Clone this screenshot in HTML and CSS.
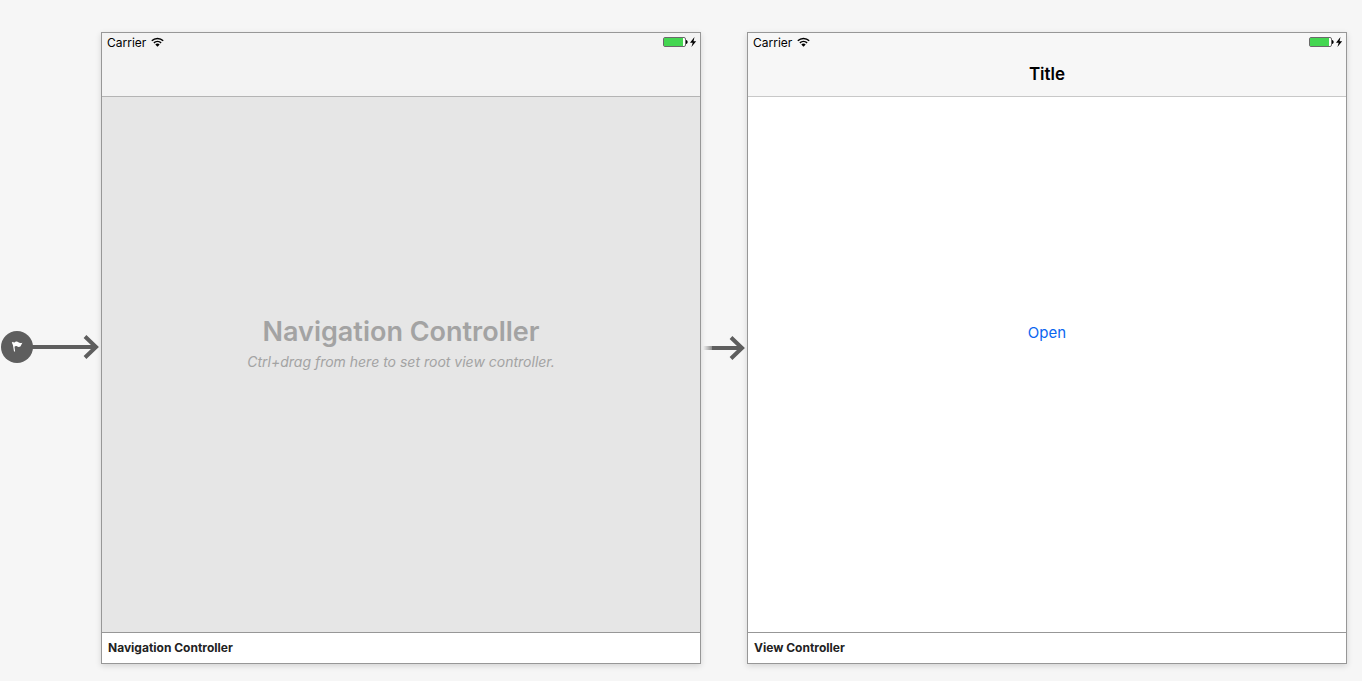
FILE: index.html
```html
<!DOCTYPE html>
<html lang="en">
<head>
    <meta charset="UTF-8">
    <meta name="viewport" content="width=device-width, initial-scale=1.0">
    <title>Main.storyboard</title>
    <link rel="stylesheet" href="styles.css">
</head>
<body>
    <main class="storyboard">
        <!-- initial controller marker -->
        <div class="entry">
            <svg width="100" height="34" viewBox="0 0 100 34" aria-hidden="true">
                <circle cx="17" cy="16" r="16" fill="#5e5e5e"/>
                <path d="M11.800 11.400l1.200-.6 1 1c2-2 3.400-1.500 4.400-.5 1.100.9 2.300.8 4 .5l-2 3.700c-1.500.8-2.600.3-3.400-.2-1-.6-1.900-.2-2.500.5l.6 4.700H14l-1.100-6.400z" fill="#fff"/>
                <path d="M32 16h63M85 5.500L96 16 85 26.500" fill="none" stroke="#5e5e5e" stroke-width="4"/>
            </svg>
        </div>

        <section class="scene">
            <header class="bar bar-empty">
                <div class="status">
                    <span>Carrier</span>
                    <svg class="wifi" width="13" height="10" viewBox="0 0 13 10" aria-hidden="true">
                        <path d="M.8 3.700a8.200 8.200 0 0 1 11.400 0M2.900 5.900a5.200 5.200 0 0 1 7.200 0" fill="none" stroke="#000" stroke-width="1.500"/>
                        <path d="M4.300 7.600a3.200 3.200 0 0 1 4.400 0L6.500 9.800z"/>
                    </svg>
                    <svg class="battery" width="34" height="10" viewBox="0 0 34 10" aria-hidden="true">
                        <rect x=".5" y=".5" width="22" height="9" rx="1.500" fill="#fff" stroke="#6a6a6a"/>
                        <path d="M1 1h19v8H1z" fill="#44d651"/>
                        <path d="M23 3c2.200.3 2.200 3.700 0 4z"/>
                        <path d="M31.500 0L27 5.700h2.700L28.400 10 33.200 4.200h-2.700z"/>
                    </svg>
                </div>
            </header>
            <div class="view view-empty">
                <h1>Navigation Controller</h1>
                <p>Ctrl+drag from here to set root view controller.</p>
            </div>
            <footer class="name">Navigation Controller</footer>
        </section>

        <!-- root view controller segue -->
        <div class="segue">
            <svg width="42" height="26" viewBox="0 0 42 26" aria-hidden="true">
                <defs>
                    <linearGradient id="fade">
                        <stop offset="0" stop-color="#5e5e5e" stop-opacity="0"/>
                        <stop offset="1" stop-color="#5e5e5e" stop-opacity=".7"/>
                    </linearGradient>
                </defs>
                <path d="M0 11h9v4H0z" fill="url(#fade)"/>
                <path d="M9 13h30M28 2.500L39 13 28 23.500" fill="none" stroke="#5e5e5e" stroke-width="4"/>
            </svg>
        </div>

        <section class="scene">
            <header class="bar">
                <div class="status">
                    <span>Carrier</span>
                    <svg class="wifi" width="13" height="10" viewBox="0 0 13 10" aria-hidden="true">
                        <path d="M.8 3.700a8.200 8.200 0 0 1 11.400 0M2.900 5.900a5.200 5.200 0 0 1 7.200 0" fill="none" stroke="#000" stroke-width="1.500"/>
                        <path d="M4.300 7.600a3.200 3.200 0 0 1 4.400 0L6.500 9.800z"/>
                    </svg>
                    <svg class="battery" width="34" height="10" viewBox="0 0 34 10" aria-hidden="true">
                        <rect x=".5" y=".5" width="22" height="9" rx="1.500" fill="#fff" stroke="#6a6a6a"/>
                        <path d="M1 1h19v8H1z" fill="#44d651"/>
                        <path d="M23 3c2.200.3 2.200 3.700 0 4z"/>
                        <path d="M31.500 0L27 5.700h2.700L28.400 10 33.200 4.200h-2.700z"/>
                    </svg>
                </div>
                <h2>Title</h2>
            </header>
            <div class="view">
                <button type="button">Open</button>
            </div>
            <footer class="name">View Controller</footer>
        </section>
    </main>
</body>
</html>
```
FILE: styles.css
```css
* {
    box-sizing: border-box;
}
body {
    margin: 0;
    background: #f6f6f6;
    font-family: Inter, "Liberation Sans", sans-serif;
    color: #000;
}
svg {
    display: block;
}
.storyboard {
    display: flex;
    align-items: stretch;
    min-height: 100vh;
    padding: 32px 15px 17px 0;
}
.entry, .segue {
    display: flex;
    align-items: center;
    flex: none;
}
.entry {
    width: 101px;
}
.segue {
    width: 46px;
    padding-left: 2px;
}
.scene {
    display: flex;
    flex-direction: column;
    flex: 1;
    background: #fff;
    border: 1px solid #979797;
    box-shadow: 0 2px 6px rgba(0, 0, 0, 0.14);
}
.bar {
    height: 64px;
    background: #f7f7f7;
    border-bottom: 1px solid #c8c8c8;
}
.bar-empty {
    background: #f3f3f3;
    border-color: #b4b4b4;
}
.status {
    display: flex;
    align-items: center;
    height: 18px;
    padding: 0 3px 0 5px;
    font-size: 12px;
}
.wifi {
    margin-left: 5px;
}
.battery {
    margin-left: auto;
}
.bar h2 {
    margin: 0;
    font-size: 17px;
    font-weight: 600;
    line-height: 46px;
    text-align: center;
}
.view {
    display: flex;
    flex-direction: column;
    align-items: center;
    justify-content: center;
    flex: 1;
    padding-bottom: 64px;
}
.view-empty {
    padding-bottom: 42px;
    background: #e6e6e6;
    color: #a3a3a3;
}
.view h1 {
    margin: 0;
    font-size: 27px;
    font-weight: 600;
    line-height: 36px;
}
.view p {
    margin: 0;
    font-size: 14px;
    font-style: italic;
    line-height: 24px;
}
.view button {
    padding: 6px;
    border: none;
    background: none;
    color: #0a66f0;
    font-family: inherit;
    font-size: 15px;
    line-height: 18px;
    cursor: pointer;
}
.name {
    height: 31px;
    padding-left: 6px;
    border-top: 1px solid #979797;
    color: #222;
    font-size: 12px;
    font-weight: 700;
    line-height: 29px;
}
```
